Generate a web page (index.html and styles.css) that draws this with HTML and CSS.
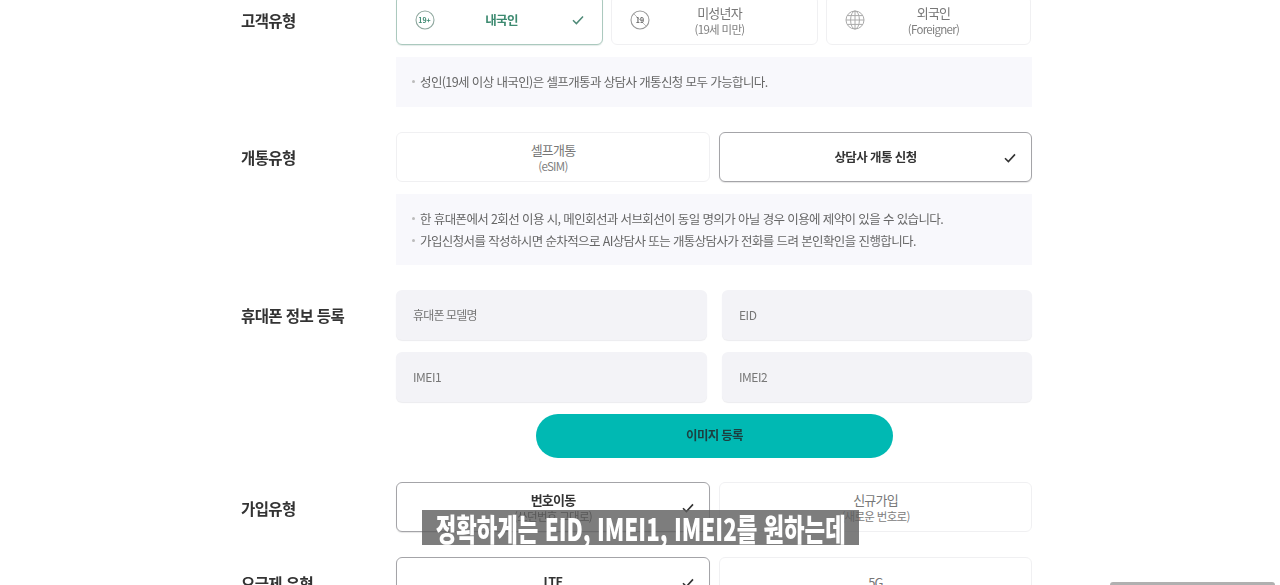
FILE: index.html
```html
<!DOCTYPE html>
<html lang="ko">
<head>
<meta charset="utf-8">
<title>가입신청</title>
<link rel="stylesheet" href="styles.css">
</head>
<body>
<main class="form">
  <section class="row row-type">
    <h2 class="label">고객유형</h2>
    <div class="body">
      <div class="cards three">
        <div class="card on-green">
          <svg class="ico" viewBox="0 0 20 20"><circle cx="10" cy="10" r="9" fill="none" stroke="#8fa89f" stroke-width="1.1"/><text x="9.5" y="12.6" class="ico-t green">19+</text></svg>
          <span class="txt nudge"><b class="green-t">내국인</b></span>
          <svg class="chk" viewBox="0 0 12 10"><path d="M1 5.2 4.4 8.6 11 1.4" fill="none" stroke="#4f8a78" stroke-width="1.5"/></svg>
        </div>
        <div class="card">
          <svg class="ico" viewBox="0 0 20 20"><circle cx="10" cy="10" r="9" fill="none" stroke="#999" stroke-width="1.1"/><path d="M3.6 3.6 16.4 16.4" stroke="#bbb" stroke-width="1"/><text x="10" y="12.6" class="ico-t">19</text></svg>
          <span class="txt shift"><span class="t1">미성년자</span><span class="t2">(19세 미만)</span></span>
        </div>
        <div class="card">
          <svg class="ico" viewBox="0 0 20 20"><g fill="none" stroke="#aaa" stroke-width="1"><circle cx="10" cy="10" r="9"/><ellipse cx="10" cy="10" rx="4.4" ry="9"/><path d="M10 1v18M1 10h18M2.2 5.6h15.6M2.2 14.4h15.6"/></g></svg>
          <span class="txt shift"><span class="t1">외국인</span><span class="t2">(Foreigner)</span></span>
        </div>
      </div>
      <ul class="note">
        <li>성인(19세 이상 내국인)은 셀프개통과 상담사 개통신청 모두 가능합니다.</li>
      </ul>
    </div>
  </section>

  <section class="row">
    <h2 class="label">개통유형</h2>
    <div class="body">
      <div class="cards two">
        <div class="card center">
          <span class="txt"><span class="t1">셀프개통</span><span class="t2">(eSIM)</span></span>
        </div>
        <div class="card on-dark center">
          <span class="txt"><b>상담사 개통 신청</b></span>
          <svg class="chk abs" viewBox="0 0 12 10"><path d="M1 5.2 4.4 8.6 11 1.4" fill="none" stroke="#333" stroke-width="1.6"/></svg>
        </div>
      </div>
      <ul class="note tall">
        <li>한 휴대폰에서 2회선 이용 시, 메인회선과 서브회선이 동일 명의가 아닐 경우 이용에 제약이 있을 수 있습니다.</li>
        <li>가입신청서를 작성하시면 순차적으로 AI상담사 또는 개통상담사가 전화를 드려 본인확인을 진행합니다.</li>
      </ul>
    </div>
  </section>

  <section class="row">
    <h2 class="label">휴대폰 정보 등록</h2>
    <div class="body">
      <div class="fields">
        <div class="field ko">휴대폰 모델명</div>
        <div class="field">EID</div>
        <div class="field">IMEI1</div>
        <div class="field">IMEI2</div>
      </div>
      <button class="pill" type="button">이미지 등록</button>
    </div>
  </section>

  <section class="row tight">
    <h2 class="label low">가입유형</h2>
    <div class="body">
      <div class="cards two">
        <div class="card on-dark center">
          <span class="txt"><b class="t1b">번호이동</b><span class="t2 dark">(쓰던번호 그대로)</span></span>
          <svg class="chk abs" viewBox="0 0 12 10"><path d="M1 5.2 4.4 8.6 11 1.4" fill="none" stroke="#333" stroke-width="1.6"/></svg>
        </div>
        <div class="card center">
          <span class="txt"><span class="t1">신규가입</span><span class="t2">(새로운 번호로)</span></span>
        </div>
      </div>
    </div>
  </section>

  <section class="row">
    <h2 class="label low">요금제 유형</h2>
    <div class="body">
      <div class="cards two">
        <div class="card on-dark center">
          <span class="txt"><b>LTE</b></span>
          <svg class="chk abs" viewBox="0 0 12 10"><path d="M1 5.2 4.4 8.6 11 1.4" fill="none" stroke="#333" stroke-width="1.6"/></svg>
        </div>
        <div class="card center">
          <span class="txt"><span class="t1">5G</span></span>
        </div>
      </div>
    </div>
  </section>
</main>
<div class="caption"><span>정확하게는 EID, IMEI1, IMEI2를 원하는데</span></div>
<div class="edge"></div>
</body>
</html>
```
FILE: styles.css
```css
* { box-sizing: border-box; }
html, body { margin: 0; height: 585px; overflow: hidden; background: #fff; }
body {
  position: relative;
  font-family: "Noto Sans CJK KR", "Noto Sans", sans-serif;
  color: #555;
  letter-spacing: -0.5px;
}
.form {
  width: 792px; margin: -5px 0 0 240px;
  display: flex; flex-direction: column; gap: 25px;
  filter: blur(.45px);
}
.row { display: flex; }
.row.tight { margin-top: -1px; }
.label {
  width: 156px; flex: none; margin: 0; padding-left: 1px;
  height: 50px; line-height: 50px;
  font-size: 15.5px; font-weight: 700; color: #333; letter-spacing: -0.6px;
}
.label.low { line-height: 52px; }
.body { width: 636px; display: flex; flex-direction: column; gap: 12px; }
.cards { display: grid; gap: 8px; }
.cards.three { grid-template-columns: 207px 207px 205px; }
.cards.two { grid-template-columns: 314px 313px; column-gap: 9px; }
.card {
  height: 50px; border: 1px solid #f0f0f2; border-radius: 6px;
  display: flex; align-items: center; padding: 0 18px;
  position: relative; background: #fff;
}
.card.center { justify-content: center; }
.on-green { border-color: #abc9be; box-shadow: 0 1px 1px #e4ece9; }
.on-dark { border-color: #a4a4a8; box-shadow: 0 1px 1px #e6e6e6; }
.ico { width: 20px; height: 20px; flex: none; }
.ico-t { font-size: 7px; font-weight: 700; text-anchor: middle; fill: #666; letter-spacing: 0; }
.ico-t.green { fill: #3f8a72; }
.txt {
  flex: 1; display: flex; flex-direction: column; align-items: center;
  font-size: 12.5px; line-height: 16px;
}
.txt.shift { margin-right: 10px; }
.txt.nudge { margin-right: 4px; }
.card.center .txt { flex: none; }
.txt b { font-weight: 700; color: #333; letter-spacing: -0.6px; }
.txt .green-t { color: #3d8a70; }
.t1, .t1b { font-size: 13px; line-height: 17px; color: #777; letter-spacing: -0.8px; }
.txt .t1b { color: #333; font-size: 13px; letter-spacing: -0.8px; }
.t2 { font-size: 11.5px; line-height: 16px; color: #808080; letter-spacing: -0.7px; }
.t2.dark { color: #444; }
.chk { width: 12px; height: 10px; flex: none; }
.chk.abs { position: absolute; right: 15px; top: 20px; }
.note {
  margin: 0; padding: 0 15px; height: 50px; list-style: none;
  background: #f8f8fc; display: flex; flex-direction: column; justify-content: center;
  font-size: 12.5px; line-height: 22px; color: #666; letter-spacing: -0.62px;
}
.note.tall { height: 71px; }
.note li { padding-left: 9px; position: relative; }
.note li::before {
  content: ""; position: absolute; left: 1px; top: 9px;
  width: 3px; height: 3px; border-radius: 50%; background: #bbb;
}
.fields { display: grid; grid-template-columns: 311px 310px; column-gap: 15px; row-gap: 12px; }
.field {
  height: 50px; background: #f3f3f7; border-radius: 6px;
  padding: 0 17px 2px; display: flex; align-items: center;
  font-size: 12px; color: #777; letter-spacing: -0.45px;
  box-shadow: 0 1px 1px #ececef;
}
.field.ko { letter-spacing: -0.85px; }
.pill {
  display: block; width: 357px; height: 44px; margin-left: 140px; border: 0; padding: 0 0 3px;
  border-radius: 22px; background: #00b9b3; align-self: flex-start;
  font-family: inherit; font-size: 12.5px; font-weight: 700; color: #1c3f40; letter-spacing: -0.7px;
}
.caption {
  position: absolute; left: 422px; top: 510px; width: 437px; height: 35px;
  background: rgba(92, 92, 92, .8); display: flex; align-items: center; justify-content: center;
  overflow: hidden;
}
.caption span {
  flex: none; font-size: 31px; font-weight: 900; color: #fff; letter-spacing: 0;
  white-space: nowrap; transform: scaleX(.72); line-height: 35px;
}
.edge {
  position: absolute; left: 1110px; top: 582px; width: 165px; height: 3px;
  background: #b0b0b0; border-radius: 3px 3px 0 0;
}
```
